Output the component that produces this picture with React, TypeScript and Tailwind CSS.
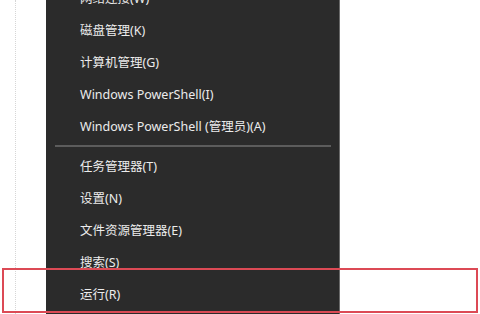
import React from 'react';

const topItems = ['网络连接(W)', '磁盘管理(K)', '计算机管理(G)', 'Windows PowerShell(I)', 'Windows PowerShell (管理员)(A)'];
const bottomItems = ['任务管理器(T)', '设置(N)', '文件资源管理器(E)', '搜索(S)', '运行(R)'];

function MenuItem({ label }: { label: string }) {
  return (
    <div className="h-8 flex items-center pl-[34px] text-[12.5px] text-[#ececec] whitespace-nowrap">
      {label}
    </div>
  );
}

export default function App() {
  return (
    <div
      className="relative w-[480px] h-[314px] overflow-hidden bg-white flex"
      style={{ fontFamily: '"Noto Sans", "Noto Sans CJK SC", sans-serif' }}
    >
      {/* left margin with dotted guide */}
      <div className="w-[46px] shrink-0 flex">
        <div className="ml-[15px] h-full border-l border-dotted border-[#d6d6d6]" />
      </div>

      {/* context menu */}
      <div className="w-[294px] shrink-0 h-full bg-[#2b2b2b] border-r border-[#6a6a6a] flex flex-col">
        <div className="-mt-[17px]">
          {topItems.map((t) => (
            <MenuItem key={t} label={t} />
          ))}
          <div className="h-2 pt-[2px] pl-[9px] pr-[8px]">
            <div className="h-[2px] w-full bg-[#5c5c5c]" />
          </div>
          {bottomItems.map((t) => (
            <MenuItem key={t} label={t} />
          ))}
        </div>
      </div>

      <div className="flex-1" />

      {/* highlight annotation */}
      <div className="absolute left-[2px] top-[268px] w-[476px] h-[45px] border-2 border-[#dc4a55]" />
    </div>
  );
}
